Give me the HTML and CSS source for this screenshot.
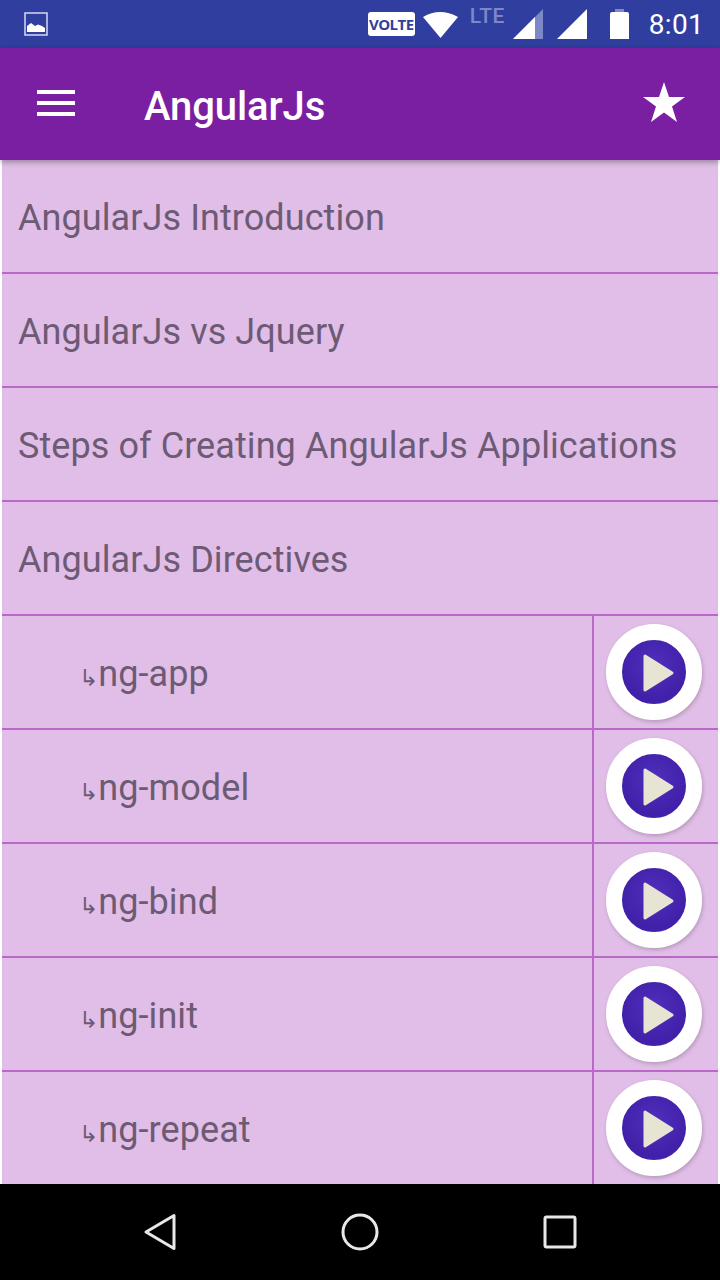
FILE: index.html
```html
<!doctype html>
<html>
  <head>
    <meta charset=utf-8>
    <title>AngularJs</title>
    <link rel="stylesheet" href="styles.css">
  </head>
  <body>
    <div class=screen>
      <div class=statusbar>
        <svg class=status-pic width=24 height=24 viewBox="0 0 24 24">
          <rect x=1 y=1 width=22 height=22 fill=none stroke="#d5d9f0" stroke-width=1.5 />
          <path d="M3 20v-6l4-3 4 3 3-1.500 4 1.500 3 2v4z" fill="#fff"/>
        </svg>
        <div class=status-right>
          <span class=volte>VOLTE</span>
          <svg class=wifi width=36 height=28 viewBox="0 0 36 28"><path d="M0 7Q17-3 35 7L17.500 28z" fill="#fff"/></svg>
          <span class=lte>LTE</span>
          <svg class=signal-a width=32 height=30 viewBox="0 0 32 30">
            <path d="M0 30L30 0V30z" fill="#7c88c8"/>
            <path d="M0 30L22 8V30z" fill="#fff"/>
          </svg>
          <svg class=signal-b width=30 height=30 viewBox="0 0 30 30"><path d="M0 30L30 0V30z" fill="#fff"/></svg>
          <svg class=battery width=20 height=30 viewBox="0 0 20 30">
            <path d="M5 3V0H14V3z" fill="#7c88c8"/>
            <path d="M0 5Q0 3 2 3H17Q19 3 19 5V30H0z" fill="#fff"/>
          </svg>
          <span class=clock>8:01</span>
        </div>
      </div>

      <div class=toolbar>
        <div class=menu><i></i><i></i><i></i></div>
        <div class=title>AngularJs</div>
        <svg class=star width=42 height=40 viewBox="0 0 42 40"><path d="M21 0L26 15H42L29 24.500L34 40L21 30.500L8 40L13 24.500L0 15H16z" fill="#fff"/></svg>
      </div>

      <div class=list>
        <div class=row><div class=row-text>AngularJs Introduction</div></div>
        <div class=row><div class=row-text>AngularJs vs Jquery</div></div>
        <div class=row><div class=row-text>Steps of Creating AngularJs Applications</div></div>
        <div class=row><div class=row-text>AngularJs Directives</div></div>
        <div class="row sub"><div class=row-text><span class=arrow>↳</span>ng-app</div><div class=row-play><div class=play><svg width=64 height=64 viewBox="0 0 64 64"><path d="M23 16L50 33L23 50z" fill="#e8e4d4" stroke="#e8e4d4" stroke-width=3 stroke-linejoin=round /></svg></div></div></div>
        <div class="row sub"><div class=row-text><span class=arrow>↳</span>ng-model</div><div class=row-play><div class=play><svg width=64 height=64 viewBox="0 0 64 64"><path d="M23 16L50 33L23 50z" fill="#e8e4d4" stroke="#e8e4d4" stroke-width=3 stroke-linejoin=round /></svg></div></div></div>
        <div class="row sub"><div class=row-text><span class=arrow>↳</span>ng-bind</div><div class=row-play><div class=play><svg width=64 height=64 viewBox="0 0 64 64"><path d="M23 16L50 33L23 50z" fill="#e8e4d4" stroke="#e8e4d4" stroke-width=3 stroke-linejoin=round /></svg></div></div></div>
        <div class="row sub"><div class=row-text><span class=arrow>↳</span>ng-init</div><div class=row-play><div class=play><svg width=64 height=64 viewBox="0 0 64 64"><path d="M23 16L50 33L23 50z" fill="#e8e4d4" stroke="#e8e4d4" stroke-width=3 stroke-linejoin=round /></svg></div></div></div>
        <div class="row sub"><div class=row-text><span class=arrow>↳</span>ng-repeat</div><div class=row-play><div class=play><svg width=64 height=64 viewBox="0 0 64 64"><path d="M23 16L50 33L23 50z" fill="#e8e4d4" stroke="#e8e4d4" stroke-width=3 stroke-linejoin=round /></svg></div></div></div>
      </div>

      <div class=navbar>
        <svg width=36 height=40 viewBox="0 0 36 40"><path d="M31 3.500V36.500L3 20z" fill=none stroke="#e8e8e8" stroke-width=3 stroke-linejoin=round /></svg>
        <svg class=nav-home width=38 height=38 viewBox="0 0 38 38"><circle cx=19 cy=19 r=17 fill=none stroke="#e8e8e8" stroke-width=3 /></svg>
        <svg width=34 height=34 viewBox="0 0 34 34"><rect x=2 y=2 width=30 height=30 rx=1.500 fill=none stroke="#e8e8e8" stroke-width=3 /></svg>
      </div>
    </div>
  </body>
</html>
```

FILE: styles.css
```css
html, body {
  margin: 0;
  padding: 0;
}

.screen {
  width: 720px;
  height: 1280px;
  display: flex;
  flex-direction: column;
  overflow: hidden;
  background: #fff;
  font-family: Roboto, sans-serif;
}

.statusbar {
  flex: 0 0 48px;
  display: flex;
  align-items: center;
  justify-content: space-between;
  padding: 0 16px 0 24px;
  background: #303f9f;
  box-sizing: border-box;
}
.status-pic { display: block }
.status-right {
  display: flex;
  align-items: center;
  height: 48px;
}
.volte {
  width: 47px;
  height: 24px;
  margin-top: -1px;
  border-radius: 3px;
  background: #fff;
  color: #303f9f;
  font: bold 15px/24px "Open Sans", sans-serif;
  letter-spacing: -.5px;
  text-align: center;
}
.wifi { margin: 0 0 0 8px }
.lte {
  width: 36px;
  margin: -16px 0 0 11px;
  color: #7c88c8;
  font: 500 21px/24px Roboto, sans-serif;
  letter-spacing: .6px;
}
.signal-a { margin: 0 0 0 7px }
.signal-b { margin: 0 0 0 12px }
.battery { margin: 0 0 0 23px }
.clock {
  margin-left: 19px;
  color: #fff;
  font-size: 28px;
  letter-spacing: .3px;
}

.toolbar {
  flex: 0 0 112px;
  display: flex;
  align-items: center;
  padding: 0 35px 0 37px;
  background: #7b1fa2;
  box-sizing: border-box;
  box-shadow: 0 2px 6px #0005;
  position: relative;
  z-index: 1;
}
.menu {
  width: 38px;
  display: flex;
  flex-direction: column;
  gap: 7px;
  margin-top: -2px;
}
.menu i {
  display: block;
  height: 4px;
  background: #fff;
}
.title {
  flex: 1;
  margin-left: 69px;
  padding-top: 4px;
  color: #fff;
  font-size: 40px;
  font-weight: 500;
  letter-spacing: -.1px;
}
.star { margin-top: -5px }

.list {
  flex: 1;
  min-height: 0;
  overflow: hidden;
  padding: 0 2px;
}
.row {
  height: 114px;
  display: flex;
  box-sizing: border-box;
  background: #e1bee7;
  border-bottom: 2px solid #ba68c8;
}
.row-text {
  flex: 1;
  padding-left: 16px;
  color: #6d5a74;
  font-size: 36px;
  letter-spacing: .08px;
  line-height: 116px;
  height: 112px;
  white-space: nowrap;
}
.sub .row-text { padding-left: 77px }
.arrow {
  font-family: "DejaVu Sans", sans-serif;
  font-size: 23px;
  letter-spacing: 0;
}
.row-play {
  width: 126px;
  display: flex;
  align-items: center;
  justify-content: center;
  border-left: 2px solid #ba68c8;
  padding-right: 4px;
  box-sizing: border-box;
}
.play {
  width: 64px;
  height: 64px;
  border: 16px solid #fff;
  border-radius: 50%;
  background: radial-gradient(circle at 50% 40%, #5030bc, #4020a8 70%, #4a2cb8);
  box-shadow: 1px 2px 4px #0003;
}
.play svg { display: block }

.navbar {
  flex: 0 0 96px;
  display: flex;
  align-items: center;
  justify-content: space-between;
  padding: 0 143px;
  background: #000;
  box-sizing: border-box;
}
.nav-home { margin-right: 2px }
```
